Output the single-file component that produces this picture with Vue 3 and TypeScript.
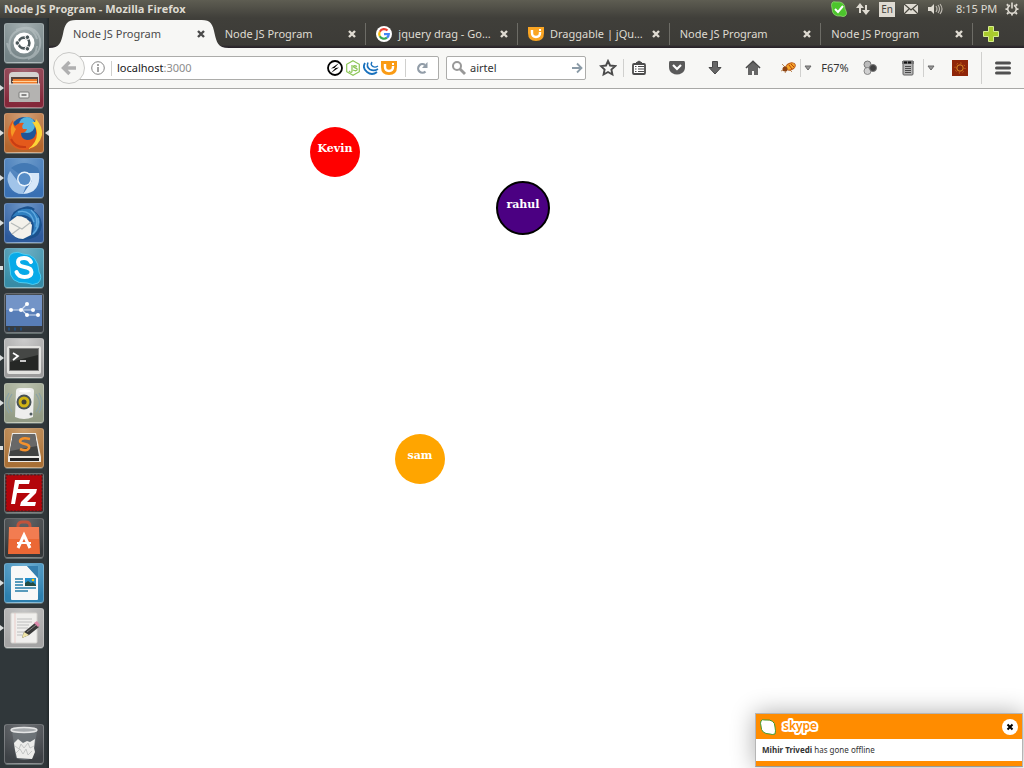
<script setup lang="ts">
import { ref } from 'vue'

interface Launcher { id: string; label: string; from: string; to: string; mark?: 'arrow' | 'bar'; active?: boolean }
interface Tab { title: string; icon?: 'google' | 'jqui' }
interface Player { name: string; color: string; x: number; y: number; selected?: boolean }

const launchers: Launcher[] = [
  { id: 'dash', label: 'Search your computer', from: '#a4afb1', to: '#748386' },
  { id: 'files', label: 'Files', from: '#a06470', to: '#84283a', mark: 'arrow' },
  { id: 'firefox', label: 'Firefox', from: '#d0a078', to: '#b3662d', mark: 'arrow', active: true },
  { id: 'chromium', label: 'Chromium', from: '#6e9ccb', to: '#3970b3', mark: 'arrow' },
  { id: 'thunderbird', label: 'Thunderbird', from: '#6d96c8', to: '#2d5a9c', mark: 'arrow' },
  { id: 'skype', label: 'Skype', from: '#6fb0c4', to: '#378ba5', mark: 'bar' },
  { id: 'usb', label: 'Startup disk', from: '#4d5358', to: '#343a40' },
  { id: 'terminal', label: 'Terminal', from: '#cccccc', to: '#9c9c9c', mark: 'arrow' },
  { id: 'sound', label: 'Sound', from: '#bcc2ae', to: '#929b85', mark: 'arrow' },
  { id: 'sublime', label: 'Sublime Text', from: '#cba070', to: '#a87036', mark: 'bar' },
  { id: 'filezilla', label: 'FileZilla', from: '#5d6061', to: '#35393b' },
  { id: 'software', label: 'Ubuntu Software', from: '#63676a', to: '#35393b' },
  { id: 'writer', label: 'LibreOffice Writer', from: '#70b0d4', to: '#2c7fae', mark: 'arrow' },
  { id: 'editor', label: 'Text Editor', from: '#c4c4c4', to: '#a4a4a4', mark: 'arrow' },
  { id: 'trash', label: 'Trash', from: '#707377', to: '#3d4145' },
]

const tabs: Tab[] = [
  { title: 'Node JS Program' },
  { title: 'Node JS Program' },
  { title: 'jquery drag - Go…', icon: 'google' },
  { title: 'Draggable | jQu…', icon: 'jqui' },
  { title: 'Node JS Program' },
  { title: 'Node JS Program' },
]

const players: Player[] = [
  { name: 'Kevin', color: '#ff0000', x: 261, y: 38 },
  { name: 'rahul', color: '#4b0082', x: 447, y: 92, selected: true },
  { name: 'sam', color: '#ffa500', x: 346, y: 345 },
]

const activeTab = ref(0)
const query = ref('airtel')
const toastOpen = ref(true)
</script>

<template>
  <div class="desktop">
    <header class="panel">
      <h1>Node JS Program - Mozilla Firefox</h1>
      <div class="tray">
        <svg width="16" height="16" viewBox="0 0 16 16"><path d="M1 2Q2 0 5 1Q14 0 14 8Q17 13 14 15Q12 16 10 15Q1 16 1 7Q0 4 1 2Z" fill="#4cc52c" stroke="#8fdc70" stroke-width=".8" /><path d="M4 8l3 3 5-6" fill="none" stroke="#fff" stroke-width="2" /></svg>
        <svg width="16" height="16" viewBox="0 0 16 16" fill="#dfdbd2"><path d="M5 2L1 7h3v5h2V7h3zM11 14l4-5h-3V4h-2v5H7z" /></svg>
        <span class="lang">En</span>
        <svg width="16" height="16" viewBox="0 0 16 16"><rect x="1" y="3" width="14" height="10" fill="#dfdbd2" /><path d="M1 3l7 6 7-6M1 13l5-5M15 13l-5-5" fill="none" stroke="#49483f" stroke-width="1.2" /></svg>
        <svg width="16" height="16" viewBox="0 0 16 16"><path d="M1 6h3l3-3v10l-3-3H1z" fill="#dfdbd2" /><path d="M9 5q2 3 0 6M11 4q3 4 0 8M13 3q4 5 0 10" fill="none" stroke="#bcb8af" stroke-width="1.2" /></svg>
      </div>
      <time>8:15 PM</time>
      <svg width="16" height="16" viewBox="0 0 16 16" fill="none" stroke="#dfdbd2"><path d="M6 4.200a4.300 4.300 0 1 0 4 0M8 1.500v6" stroke-width="1.600" /><path d="M2.800 3.300l1.600 1.400M13.200 3.300l-1.600 1.400M1.500 8.200h2M12.500 8.200h2M3 13l1.500-1.500M13 13l-1.500-1.500M8 12.500v2" stroke-width="1.800" /></svg>
    </header>

    <div class="workspace">
      <nav class="dock" aria-label="Launcher">
        <button
          v-for="app in launchers"
          :key="app.id"
          class="launcher"
          :class="[app.mark, { active: app.active, last: app.id === 'trash' }]"
          :aria-label="app.label"
          :style="{ '--from': app.from, '--to': app.to }"
        >
          <svg viewBox="0 0 40 40">
            <g v-if="app.id === 'dash'">
              <g fill="none" stroke="#c0c9cb" stroke-width="2" opacity=".55"><path d="M7 31Q1 11 18 6Q29 3 33 16M12 7Q31 0 36 16Q38 31 24 36M3 20Q7 37 22 35Q32 34 33 23" /></g>
              <circle cx="20" cy="20" r="10.500" fill="#fff" /><circle cx="20" cy="20" r="5.400" fill="none" stroke="#4c585b" stroke-width="2.600" />
              <g fill="#4c585b" stroke="#fff" stroke-width="1"><circle cx="13.300" cy="20" r="2.300" /><circle cx="23.400" cy="14.200" r="2.300" /><circle cx="23.400" cy="25.800" r="2.300" /></g>
            </g>
            <g v-else-if="app.id === 'files'">
              <path d="M5 34V8q0-4 4-4h22q4 0 4 4v26z" fill="#d6d4d1" /><rect x="7" y="9" width="27" height="8" fill="#58443c" /><path d="M9 17v-6h24v6z" fill="#ef7d2c" /><path d="M8 13h25v1H8z" fill="#ffd19b" /><path d="M5 16h31v18H5z" fill="#b4b3b1" /><path d="M5 16h31" stroke="#f0efed" /><rect x="15" y="24" width="10" height="6" rx="1" fill="#ededeb" stroke="#7b7a78" /><path d="M17.500 27h5" stroke="#656565" stroke-width="1.500" />
            </g>
            <g v-else-if="app.id === 'firefox'">
              <circle cx="21" cy="19" r="15" fill="#1f5598" /><circle cx="23" cy="12" r="8" fill="#55b4de" />
              <path d="M34 9q6 11 1 20-6 9-17 8Q5 35 4 21q0-8 5-14 0 4 2 6 4-4 9-3-3 3-1 6h4q-1 4-6 4 0 6 6 7 6 0 8-4 3-7-2-13 5 2 5-1z" fill="#e4591b" />
              <path d="M32 6q7 8 6 16-3 12-14 14 9-6 9-16-1-7-5-11 4 1 4-3z" fill="#fbd537" /><path d="M9 9q0 5 3 7l-4 8q-3-8 1-15" fill="#f69724" /><path d="M7 26q4 9 15 8" fill="none" stroke="#c83d14" stroke-width="2" />
            </g>
            <g v-else-if="app.id === 'chromium'">
              <path d="M20.500 20L7 10Q20 0 34 10l2 5H21z" fill="#4379b4" /><path d="M6 13l9 12q3 3 7 3l-3 8A15 15 0 0 1 6 13" fill="#a1c4e9" /><path d="M35 15H23l5 8-9 13q18-1 16-21" fill="#d6e7f8" /><circle cx="20.500" cy="21" r="7.500" fill="#e9f3fc" /><circle cx="20.500" cy="21" r="6" fill="#568cc6" />
            </g>
            <g v-else-if="app.id === 'thunderbird'">
              <path d="M6 18Q8 6 20 4q6-2 11 2-2 1-1 2 7 4 8 14-1 12-12 14-14 4-20-8z" fill="#1b518d" /><path d="M8 14Q14 4 26 6q9 4 10 13-1 10-9 14 5-9 1-16-6-8-20-3z" fill="#2f7fc0" /><path d="M5 19l8-6q10 0 15 9l-1 10-8 4q-9 0-14-9z" fill="#f3f1eb" /><path d="M7 20l11 6 9-7M8 31l8-6" fill="none" stroke="#b6bab9" stroke-width="1.200" /><path d="M14 9q12-3 16 10M27 7q8 7 5 17M34 15q2 9-5 16" fill="none" stroke="#63abe0" stroke-width="1.300" />
            </g>
            <g v-else-if="app.id === 'skype'">
              <path d="M5 13q-1-6 4-8 5-2 10 1 15 0 16 18 4 6-1 11-5 3-11 0Q5 36 6 20z" fill="#08aae8" stroke="#50cbee" /><path d="M27 14q-2-4-7-4-6 0-6 4 0 4 6.500 5 7 1 7 5 0 5-7 5-6 0-8-5" fill="none" stroke="#fff" stroke-width="4" stroke-linecap="round" />
            </g>
            <g v-else-if="app.id === 'usb'">
              <rect x="2" y="2" width="36" height="31" fill="#587eb8" /><path d="M2 2h36v15H2z" fill="#7394c7" /><path d="M7 17h22M17 17l6-6M18 17l5 5h11" fill="none" stroke="#d2deef" stroke-width="1.200" /><g fill="#fff"><circle cx="7" cy="17" r="2" /><circle cx="17" cy="17" r="2" /><circle cx="23" cy="11" r="2" /><circle cx="29" cy="17" r="2" /><circle cx="23" cy="22" r="2" /><circle cx="34" cy="22" r="2" /></g><path d="M4 36h16" stroke="#244b76" stroke-width="3" stroke-dasharray="2 4" />
            </g>
            <g v-else-if="app.id === 'terminal'">
              <rect x="3" y="8" width="34" height="28" rx="2" fill="#e3e3e0" /><rect x="5.500" y="10.500" width="29" height="22" fill="#252725" stroke="#808080" /><path d="M6 11h28v6L6 24z" fill="#454745" /><path d="M9 15l5 3-5 4M16 23h6" fill="none" stroke="#fff" stroke-width="1.700" />
            </g>
            <g v-else-if="app.id === 'sound'">
              <path d="M8 11q-7 9 0 18M5 10q-7 10 0 20M32 11q7 9 0 18M35 10q6 10 0 20" fill="none" stroke="#8aa2a8" stroke-width="1.200" /><path d="M12 8q0-3 4-3h10q4 0 4 3l-1 26q-9 4-18 0z" fill="#eeeeed" /><ellipse cx="21" cy="8" rx="6" ry="1.500" fill="#fff" /><circle cx="20" cy="19" r="7.500" fill="#485256" /><circle cx="20" cy="19" r="5.500" fill="#d1b415" /><circle cx="20" cy="19" r="2.500" fill="#3f4137" /><circle cx="27" cy="31" r="1.500" fill="#505b5f" />
            </g>
            <g v-else-if="app.id === 'sublime'">
              <path d="M8 5h24l5 24v5H4v-5z" fill="#edebe7" /><path d="M9 6h22l4 22H5z" fill="#424342" /><path d="M9 6h22l2 12-27 5z" fill="#686868" /><path d="M6 30h29v3H6z" fill="#242424" /><path d="M26 11q-9-2-10 2 0 2 5 3 5 1 4 4-2 4-9 1" fill="none" stroke="#f4912c" stroke-width="2.600" />
            </g>
            <g v-else-if="app.id === 'filezilla'">
              <rect x="2" y="2" width="36" height="36" fill="#b4050b" stroke="#5e1b1e" stroke-width="1.500" stroke-dasharray="2 1.500" /><path d="M11 7h15l-1 4H15l-1 5h8l-1 4h-8l-2 11H7zM18 16h15l-1 4-9 9h9l-1 4H16l1-4 9-9h-9z" fill="#fff" />
            </g>
            <g v-else-if="app.id === 'software'">
              <path d="M14 12V7q1-3 4-3h4q4 0 4 4v5" fill="none" stroke="#c1533b" stroke-width="3" /><path d="M5 9h30l1 27H4z" fill="#eb6835" /><path d="M5 9h30v12H5z" fill="#f27c51" /><path d="M14 30l6-13 6 13" fill="none" stroke="#fff" stroke-width="3" /><path d="M13 25h14" stroke="#fff" stroke-width="2" />
            </g>
            <g v-else-if="app.id === 'writer'">
              <path d="M7 5q0-2 2-2h14l11 12v21q0 1-1 1H8q-1 0-1-1z" fill="#f8f8f8" /><path d="M23 3h11v12z" fill="#367fae" /><rect x="21" y="15" width="11" height="8" fill="#248fcc" /><path d="M21 23v-3l3-2 3 2 2-1 3 3v1z" fill="#254c42" /><circle cx="29" cy="17" r="1.300" fill="#ffc500" /><path d="M11 16h8M11 19h8M11 22h8M11 25h21M11 28h13" stroke="#247ca8" stroke-width="1.300" />
            </g>
            <g v-else-if="app.id === 'editor'">
              <rect x="7" y="5" width="26" height="30" rx="1" fill="#f0efed" stroke="#d6d4d0" /><path d="M11 5v30" stroke="#e9b6b4" stroke-width=".6" /><path d="M13 11h15M13 14h15M13 17h12M13 20h11M13 24h7M13 27h6" stroke="#bebebe" /><path d="M18 30l2-6 11-9 4 4-10 8z" fill="#393939" /><path d="M30 15l3-2 3 4-2 2z" fill="#db88aa" /><path d="M18 30l2-6 5 3z" fill="#f0e5a7" /><path d="M23 24l9-7" stroke="#858585" />
            </g>
            <g v-else>
              <path d="M8 7h25l-4 27q-9 4-17 0z" fill="#737a7f" opacity=".7" /><ellipse cx="20" cy="6" rx="13" ry="2.500" fill="#a6aaad" stroke="#e4e5e5" stroke-width="1.500" /><path d="M10 19l4-4 5 4 4-2 3 1 5-3-1 9 1 4-3 7-15-1-2-8z" fill="#ececea" /><path d="M11 22l4 3 2-5 3 4 4-5 2 5 4-2M12 29l4-4 3 5 3-5 2 6 4-4" fill="none" stroke="#c4c6c5" />
            </g>
          </svg>
        </button>
      </nav>

      <main class="browser">
        <div class="tabstrip" role="tablist">
          <div v-for="(tab, i) in tabs" :key="i" class="tab" :class="{ selected: activeTab === i }">
            <svg v-if="activeTab === i" class="tab-shape" viewBox="0 0 180 28" preserveAspectRatio="none"><path d="M0 28C11 28 12 22 14 14C16 4 18 0 27 0H153C162 0 164 4 166 14C168 22 169 28 180 28Z" fill="#f7f7f5" /></svg>
            <button class="tab-title" role="tab" :aria-selected="activeTab === i" @click="activeTab = i">
              <svg v-if="tab.icon === 'google'" width="16" height="16" viewBox="0 0 16 16"><circle cx="8" cy="8" r="8" fill="#fff" /><g fill="none" stroke-width="2.200"><path d="M11.500 4.600A4.800 4.800 0 0 0 3.800 5.700" stroke="#ea4335" /><path d="M3.800 5.700a4.800 4.800 0 0 0 0 4.600" stroke="#fbbc05" /><path d="M3.800 10.300a4.800 4.800 0 0 0 7.200 1.400" stroke="#34a853" /><path d="M11 11.700q1.700-1.400 1.800-3.600H8" stroke="#4285f4" /></g></svg>
              <svg v-else-if="tab.icon === 'jqui'" width="16" height="16" viewBox="0 0 16 16"><path d="M0 1h16v6q0 8-8 8T0 7z" fill="#faa523" /><path d="M4 4v3q0 4 4 4t4-4V6" fill="none" stroke="#fff" stroke-width="2.400" /><path d="M11 3h2v2h-2z" fill="#fff" /></svg>
              <span>{{ tab.title }}</span>
            </button>
            <button class="tab-close" :aria-label="`Close ${tab.title}`">
              <svg width="10" height="10" viewBox="0 0 10 10"><path d="M2 2l6 6M8 2l-6 6" stroke="currentColor" stroke-width="2.400" /></svg>
            </button>
          </div>
          <button class="new-tab" aria-label="New tab"><svg width="18" height="18" viewBox="0 0 18 18"><path d="M6.500 1.500h5v5h5v5h-5v5h-5v-5h-5v-5h5z" fill="#a9cb2e" stroke="#d6ed8c" /></svg></button>
        </div>

        <div class="toolbar">
          <button class="back" aria-label="Back"><svg width="16" height="16" viewBox="0 0 16 16"><path d="M8.500 2L2.500 8l6 6M3 8h12" fill="none" stroke="#b0b0b0" stroke-width="3.400" /></svg></button>
          <div class="address">
            <button class="info" aria-label="Site information"><svg width="14" height="14" viewBox="0 0 14 14"><circle cx="7" cy="7" r="6.300" fill="none" stroke="#858585" /><path d="M7 6v5M7 3v2" stroke="#858585" stroke-width="1.500" /></svg></button>
            <i class="rule" />
            <a class="url" href="http://localhost:3000">localhost<span>:3000</span></a>
            <div class="libs">
              <svg viewBox="0 0 16 16"><circle cx="8" cy="8" r="7" fill="#fff" stroke="#000" stroke-width="1.800" /><path d="M12 3L4 8.500 7.500 8zM4 13l8-5.500L8.500 8z" fill="#000" /></svg>
              <svg viewBox="0 0 16 16"><path d="M8 .7l6.300 3.600v7.400L8 15.300l-6.300-3.600V4.300z" fill="#fff" stroke="#8cc657" stroke-width="1.200" /><path d="M7 5v6q0 2-2 1l-1-1M12 6.500q-3-1.500-3.500 0 0 1 2 1.500t1.500 2q-1 1.500-4 0" fill="none" stroke="#8cc657" stroke-width="1.300" /></svg>
              <svg viewBox="0 0 16 16" fill="none" stroke="#1971bd"><path d="M2 3q-3 5 2 9 5 4 10 0" stroke-width="1.800" /><path d="M5 2.500q-2 4 2 7 4 2 8-.5" stroke-width="1.600" /><path d="M9 2q-2 3 1 4.500 2 1.500 5-.5" stroke-width="1.400" /></svg>
              <svg viewBox="0 0 16 16"><path d="M0 1h16v6q0 8-8 8T0 7z" fill="#fa9b14" /><path d="M4 4v3q0 4 4 4t4-4V6" fill="none" stroke="#fff" stroke-width="2.400" /><path d="M11 3h2v2h-2z" fill="#fff" /></svg>
            </div>
            <i class="rule" />
            <button class="reload" aria-label="Reload"><svg width="14" height="14" viewBox="0 0 14 14"><path d="M10 4A4.300 4.300 0 1 0 10.500 10.500" fill="none" stroke="#929da8" stroke-width="2.200" /><path d="M12.500 1v6H7z" fill="#929da8" /></svg></button>
          </div>

          <form class="search" @submit.prevent>
            <svg width="16" height="16" viewBox="0 0 16 16" fill="none" stroke="#989898"><circle cx="6" cy="6" r="4" stroke-width="2" /><path d="M9 9l5 5" stroke-width="2.800" /></svg>
            <input v-model="query" type="text" aria-label="Search">
            <button aria-label="Go"><svg width="12" height="12" viewBox="0 0 12 12"><path d="M1 6h9M6 1.500L10.500 6 6 10.500" fill="none" stroke="#8b9ba7" stroke-width="1.800" /></svg></button>
          </form>

          <div class="actions">
            <button class="mid" aria-label="Bookmark"><svg width="18" height="18" viewBox="0 0 18 18"><path d="M9 2l2.100 4.500 5 .6-3.700 3.400 1 5L9 13l-4.400 2.500 1-5L2 7.100l5-.6z" fill="none" stroke="#4b4b4b" stroke-width="1.900" /></svg></button>
            <i class="rule" />
            <button class="mid list" aria-label="Bookmarks list"><svg width="16" height="16" viewBox="0 0 16 16"><rect x="2" y="4" width="12" height="10" rx="1" fill="#fff" stroke="#4b4b4b" stroke-width="1.800" /><path d="M5 3l3-2 3 2z" fill="#4b4b4b" stroke="#4b4b4b" /><path d="M4 6.500h1.500M7 6.500h6M4 9h1.500M7 9h6M4 11.500h1.500M7 11.500h6" stroke="#4b4b4b" stroke-width="1.200" /></svg></button>
            <button class="wide" aria-label="Pocket"><svg width="16" height="16" viewBox="0 0 16 16"><path d="M1 1h14q1 0 1 2v4q0 4-3 6-5 3-10 0-3-2-3-6V3q0-2 1-2" fill="#5a5a5a" /><path d="M4 5l4 4 4-4" fill="none" stroke="#fff" stroke-width="2.200" /></svg></button>
            <button class="wide" aria-label="Downloads"><svg width="16" height="16" viewBox="0 0 16 16"><path d="M5.500 1.500h5v6H14L8 14 2 7.500h3.500z" fill="#666" stroke="#484848" /></svg></button>
            <button class="wide" aria-label="Home"><svg width="16" height="16" viewBox="0 0 16 16"><path d="M3 7l5-5 5 5v8H9v-4H7v4H3z" fill="#666" /><path d="M1 8l7-6.500L15 8" fill="none" stroke="#484848" stroke-width="1.700" /></svg></button>
            <button class="bug" aria-label="Firebug"><svg width="16" height="16" viewBox="0 0 16 16"><path d="M2 4l3 3M10 10l2 2M3 10l-2 1M6 11l-1 2" stroke="#b98a5c" /><ellipse cx="10.500" cy="6.500" rx="5" ry="3.300" transform="rotate(-25 10.500 6.500)" fill="#f5a527" stroke="#b9591a" /><path d="M9 5l3 4M11 4l3 3" stroke="#b8400c" /><circle cx="5" cy="9" r="2.500" fill="#8c4312" /></svg></button>
            <i class="rule" />
            <button class="drop" aria-label="Firebug options"><svg viewBox="0 0 8 6"><path d="M1 1h6L4 5z" fill="#999" stroke="#666" /></svg></button>
            <button class="zoom">F67%</button>
            <button class="dots" aria-label="Proxy"><svg width="16" height="16" viewBox="0 0 16 16"><circle cx="5.500" cy="4.500" r="3.500" fill="#bcbcbc" stroke="#777" /><circle cx="5.500" cy="11" r="3.500" fill="#d0d0d0" stroke="#888" /><circle cx="11" cy="8" r="3.500" fill="#414141" stroke="#777" /></svg></button>
            <button class="mid" aria-label="Page tools"><svg width="16" height="16" viewBox="0 0 16 16"><path d="M3 1h10v13q0 1-1 1H4q-1 0-1-1z" fill="#b5b5b5" stroke="#606060" /><path d="M2 1h12v3H2z" fill="#777" /><path d="M4 2.500h8" stroke="#111" stroke-width="2" stroke-dasharray="3 1" /><path d="M5 6.500h6M5 8.500h6M5 10.500h6M5 12.500h6" stroke="#4a4a4a" /></svg></button>
            <i class="rule" />
            <button class="drop" aria-label="Page tool options"><svg viewBox="0 0 8 6"><path d="M1 1h6L4 5z" fill="#999" stroke="#666" /></svg></button>
            <button class="mid sun" aria-label="Extension"><svg width="16" height="16" viewBox="0 0 16 16"><rect width="16" height="16" fill="#8f2609" /><circle cx="8" cy="8" r="3.200" fill="#7c260d" stroke="#e08a25" /><circle cx="8" cy="8" r="5" fill="none" stroke="#e08a25" stroke-dasharray="1 2.900" /></svg></button>
            <i class="rule tall" />
            <button class="menu" aria-label="Menu"><svg width="16" height="14" viewBox="0 0 16 14"><path d="M1.500 2h13M1.500 7h13M1.500 12h13" stroke="#505050" stroke-width="3" stroke-linecap="round" /></svg></button>
          </div>
        </div>

        <section class="page">
          <div
            v-for="p in players"
            :key="p.name"
            class="player"
            :class="{ selected: p.selected }"
            :style="{ left: `${p.x}px`, top: `${p.y}px`, backgroundColor: p.color }"
          >{{ p.name }}</div>
        </section>
      </main>
    </div>

    <aside v-if="toastOpen" class="toast" role="status">
      <div class="toast-head">
        <svg width="16" height="16" viewBox="0 0 16 16"><path d="M1 2q1-2 4-1 10-1 10 7 1 4 0 7-3 1-5 0Q1 15 1 7 0 4 1 2" fill="#fff" stroke="#43982b" /></svg>
        <svg width="44" height="20" viewBox="0 0 44 20"><text x="4" y="13" font-size="12" font-weight="600" fill="#ff8c00" stroke="#fff" stroke-width="4" stroke-linejoin="round" paint-order="stroke">skype</text></svg>
        <button aria-label="Close notification" @click="toastOpen = false"><svg width="8" height="8" viewBox="0 0 8 8"><path d="M1.500 1.500l5 5M6.500 1.500l-5 5" stroke="#000" stroke-width="2" /></svg></button>
      </div>
      <p><b>Mihir Trivedi</b> has gone offline</p>
    </aside>
  </div>
</template>

<style>
body { margin: 0; }
</style>

<style scoped>
* { box-sizing: border-box; }
.desktop { position: relative; display: flex; flex-direction: column; height: 100vh; overflow: hidden; background: #fff; color: #333; font: 11px/16px "Noto Sans", "Open Sans", sans-serif; }
button { display: inline-flex; align-items: center; justify-content: center; flex: none; padding: 0; border: 0; background: none; color: inherit; font: inherit; cursor: pointer; }
svg { display: block; flex: none; }

.panel { display: flex; flex: none; align-items: center; height: 18px; padding: 0 4px; background: linear-gradient(#5e5d52, #403f3a); color: #dfdbd2; }
.panel h1 { flex: 1; margin: 0; font: 700 11px/18px "Open Sans", sans-serif; }
.tray { display: flex; align-items: center; gap: 8px; }
.lang { width: 16px; height: 15px; background: #dfdbd2; color: #45443e; font-size: 10px; line-height: 15px; text-align: center; }
.panel time { width: 41px; margin: 0 7px 0 13px; white-space: nowrap; }

.workspace { display: flex; flex: 1; min-height: 0; }
.dock { display: flex; flex: none; flex-direction: column; gap: 5px; width: 49px; padding: 5px 4px 4px; background: linear-gradient(90deg, #30373a 0 46px, #22282a 49px); }
.launcher { position: relative; width: 40px; height: 40px; border: 1px solid #ffffff40; border-radius: 3px; background: radial-gradient(circle at 50% 0, var(--from), var(--to) 85%); box-shadow: 0 2px 0 -1px #64706f; }
.launcher svg { width: 40px; height: 40px; margin: -1px; }
.launcher.last { margin-top: auto; }
.launcher.arrow::before, .launcher.active::after { content: ""; position: absolute; top: 16px; left: -5px; border: 3px solid transparent; border-left: 4px solid #dadddd; border-right: 0; }
.launcher.active::after { left: auto; right: -6px; border-right: 4px solid #dadddd; border-left: 0; }
.launcher.bar::before { content: ""; position: absolute; top: 17px; left: -5px; width: 3px; height: 4px; background: #dadddd; }

.browser { display: flex; flex: 1; flex-direction: column; min-width: 0; }
.tabstrip { display: flex; flex: none; height: 30px; padding: 2px 15px 0 14px; background: linear-gradient(#403f3a, #3c3b37 27px, #29242a 29px); color: #dfdbd2; }
.tab { position: relative; display: flex; flex: 1 1 0; align-items: center; min-width: 0; padding: 0 9px 0 10px; }
.tab:nth-child(n+2)::after { content: ""; position: absolute; top: 3px; right: 0; width: 1px; height: 22px; background: #6d6c66; }
.tab.selected { color: #4a4a4a; }
.tab-shape { position: absolute; top: 0; left: -14px; width: calc(100% + 28px); height: 28px; }
.tab-title { position: relative; flex: 1; justify-content: flex-start; gap: 6px; min-width: 0; height: 24px; white-space: nowrap; }
.tab-close { position: relative; width: 10px; height: 24px; }
.new-tab { width: 36px; }

.toolbar { display: flex; flex: none; align-items: center; height: 41px; padding-left: 4px; border-bottom: 1px solid #a8a8a6; background: #f7f7f5; }
.back { position: relative; z-index: 1; width: 32px; height: 32px; border: 1px solid #c9c9c7; border-radius: 50%; background: #f7f7f5; }
.address { display: flex; flex: 1; align-items: center; min-width: 0; height: 24px; margin-left: -16px; padding-left: 21px; border: 1px solid #acacaa; border-radius: 2px; background: #fff; }
.info { width: 14px; }
.rule { flex: none; width: 1px; height: 18px; background: #d0d0ce; }
.info + .rule { margin: 0 5px 0 6px; height: 15px; }
.url { flex: 1; color: #202020; text-decoration: none; }
.url span { color: #8c8c8c; }
.libs { display: flex; gap: 2px; margin-right: 8px; }
.libs svg { width: 16px; height: 16px; }
.reload { width: 32px; }
.search { display: flex; flex: none; align-items: center; width: 140px; height: 24px; margin: 0 7px; padding: 0 2px 0 4px; border: 1px solid #acacaa; border-radius: 2px; background: #fff; }
.search input { flex: 1; min-width: 0; padding: 0 0 0 3px; border: 0; outline: 0; background: none; color: #333; font: inherit; }
.search button { width: 13px; }
.actions { display: flex; flex: none; align-items: center; }
.mid { width: 30px; }
.list { margin-right: 4px; }
.wide { width: 38px; }
.bug { width: 24px; margin-left: 4px; }
.drop { width: 13px; }
.drop svg { width: 8px; height: 6px; }
.zoom { width: 42px; }
.dots { width: 28px; margin-right: 9px; }
.sun { margin: 0 6px 0 8px; }
.tall { height: 32px; }
.menu { width: 42px; }

.page { position: relative; flex: 1; overflow: hidden; background: #fff; }
.player { position: absolute; width: 50px; height: 50px; padding-top: 14px; border-radius: 50%; color: #fff; font: 700 11px/16px "DejaVu Serif", serif; text-align: center; cursor: move; }
.player.selected { width: 54px; height: 54px; border: 2px solid #000; }

.toast { position: absolute; right: 1px; bottom: 1px; width: 268px; border: 1px solid #b5b5b5; border-bottom-color: #999; background: #fff; box-shadow: 0 0 24px #00000055; }
.toast-head { display: flex; align-items: center; gap: 3px; height: 25px; padding: 0 4px; background: #ff8c00; }
.toast-head button { width: 16px; height: 16px; margin-left: auto; border-radius: 50%; background: #fff; }
.toast p { margin: 0; padding: 3px 6px; border-bottom: 5px solid #ff8c00; font-size: 8px; }
</style>
